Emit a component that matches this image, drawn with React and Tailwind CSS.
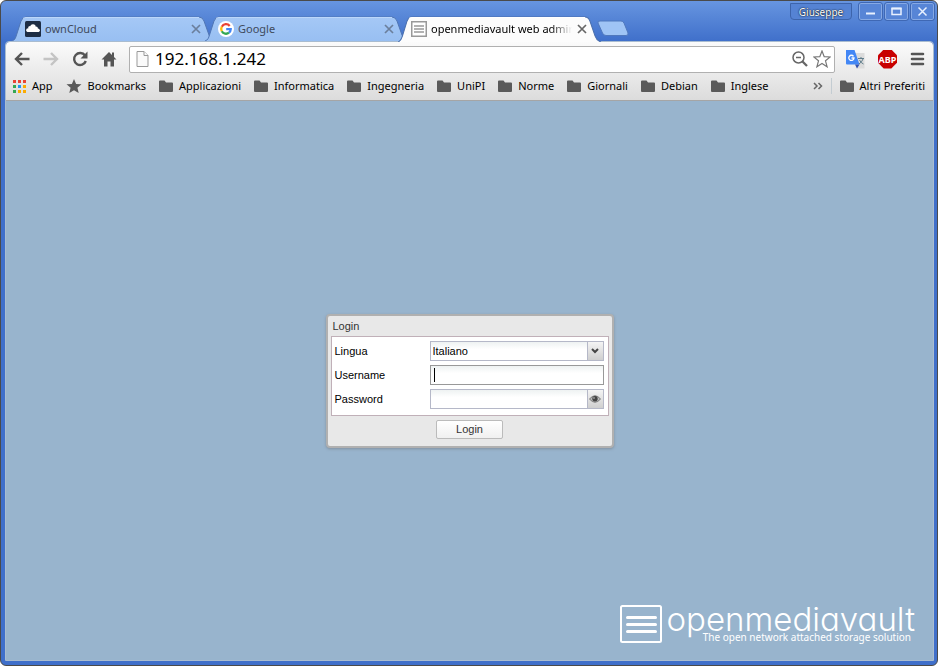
import React, { useState } from "react";

const bookmarks = ["Applicazioni", "Informatica", "Ingegneria", "UniPI", "Norme", "Giornali", "Debian", "Inglese"];

function Folder() {
  return (
    <svg className="shrink-0" width="15" height="13" viewBox="0 0 15 13" fill="#5a5a5a" aria-hidden="true">
      <path d="M1 0.500h4.500l1.500 2h6q1 0 1 1v7.500q0 1-1 1H1q-1 0-1-1V1.500q0-1 1-1z" />
    </svg>
  );
}

function Bookmark({ children, icon }) {
  return (
    <a href="#" className={`flex shrink-0 items-center whitespace-nowrap ${icon ? "gap-1.5" : "gap-[5px]"}`}>
      {icon || <Folder />}
      <span>{children}</span>
    </a>
  );
}

function Close({ dark }) {
  return (
    <button type="button" aria-label="Close tab" className="flex size-3 shrink-0 items-center justify-center">
      <svg width="10" height="10" viewBox="0 0 10 10" stroke={dark ? "#666" : "#6b7f9c"} strokeWidth="1.700" fill="none">
        <path d="M1 1l8 8M9 1L1 9" />
      </svg>
    </button>
  );
}

function Tab({ title, icon, active }) {
  return (
    <div className={`relative -mr-[11px] flex w-[204px] shrink items-center gap-1 pr-[14px] pl-[13px] ${active ? "z-10 h-[26px] text-black" : "h-[25px] text-[#3f4a5c]"}`}>
      <svg className="absolute inset-0 h-full w-full" viewBox="0 0 204 25" preserveAspectRatio="none" aria-hidden="true">
        <path
          d="M0 25C3 24 3.500 22 4.500 19L9 5Q10.500 1 14 1H187Q190.500 1 192 5L197 19C198 22 200 24 203 25"
          fill={active ? "#fcfcfc" : "url(#tabFill)"}
          stroke={active ? "#4a6fae" : "#5076b5"}
        />
        <path d="M11 2.500Q12 1.500 14 1.500H187" fill="none" stroke={active ? "#fff" : "#bcd7fa"} />
        <defs>
          <linearGradient id="tabFill" x1="0" y1="0" x2="0" y2="1">
            <stop offset="0" stopColor="#a5c8f6" />
            <stop offset="1" stopColor="#98bff2" />
          </linearGradient>
        </defs>
      </svg>
      <span className="relative shrink-0">{icon}</span>
      <a href="#" className={`relative min-w-0 flex-1 overflow-hidden whitespace-nowrap ${active ? "mask-r-from-85%" : ""}`}>{title}</a>
      <span className="relative"><Close dark={active} /></span>
    </div>
  );
}

const cloudIcon = (
  <svg width="16" height="16" viewBox="0 0 16 16">
    <rect width="16" height="16" rx="1.500" fill="#1d2d44" />
    <g fill="#fff">
      <circle cx="3" cy="9" r="1.800" /><circle cx="5" cy="7" r="1.900" /><circle cx="8" cy="6" r="2.700" /><circle cx="11" cy="7.500" r="1.900" />
      <circle cx="13" cy="9.300" r="1.700" /><rect x="1.500" y="8" width="13" height="3" rx="1.500" />
    </g>
  </svg>
);

const googleIcon = (
  <svg width="16" height="16" viewBox="0 0 16 16" fill="none" strokeWidth="2.300">
    <circle cx="8" cy="8" r="8" fill="#fff" />
    <path d="M11.700 4.900A4.800 4.800 0 0 0 3.800 5.700" stroke="#ea4335" />
    <path d="M3.800 5.700A4.800 4.800 0 0 0 3.800 10.300" stroke="#fbbc05" />
    <path d="M3.800 10.300A4.800 4.800 0 0 0 11 11.700" stroke="#34a853" />
    <path d="M11 11.700A4.800 4.800 0 0 0 12.700 8.200H8.200" stroke="#4285f4" />
  </svg>
);

const listIcon = (
  <svg width="16" height="16" viewBox="0 0 16 16" stroke="#999">
    <rect x="0.750" y="0.750" width="14.500" height="14.500" fill="#fff" strokeWidth="1.500" />
    <path d="M3 5h10M3 8h10M3 11h10" strokeWidth="1.500" />
  </svg>
);

function WindowButton({ label, children }) {
  return (
    <button type="button" aria-label={label} className="flex h-[17px] w-[23px] items-center justify-center rounded-xs border border-[#86a9e4] bg-[#5785d6] outline outline-[#3f68b4]">
      <svg width="13" height="11" viewBox="0 0 13 11" fill="none" stroke="#e9f1ff" strokeWidth="1.500">{children}</svg>
    </button>
  );
}

function TitleBar() {
  return (
    <header className="flex h-10 items-start pl-[7px]">
      <nav aria-label="Tabs" className="flex min-w-0 flex-1 pt-[15px] text-[11px] leading-4">
        <Tab title="ownCloud" icon={cloudIcon} />
        <Tab title="Google" icon={googleIcon} />
        <Tab title="openmediavault web administration" icon={listIcon} active />
        <button type="button" aria-label="New tab" className="ml-1.5 flex h-[25px] shrink-0 items-center">
          <svg width="32" height="17" viewBox="0 0 32 17">
            <path d="M3 1H24Q26 1 27 3L31 13Q31.500 15.500 29 15.500H9Q6.500 15.500 5.500 13L1 3Q0.500 1 3 1Z" fill="#9fc4f5" stroke="#5078bd" />
          </svg>
        </button>
      </nav>
      <div className="flex shrink-0 items-start gap-[3px] pt-[2px]">
        <button type="button" className="mr-1 h-[17px] w-[62px] rounded-b-sm border border-[#3d64ab] bg-[#5583d4] text-[10px] leading-4 text-white [text-shadow:0_0_1px_#000,0_0_2px_#123]">Giuseppe</button>
        <WindowButton label="Minimize"><path d="M2 7.500h9" strokeWidth="2" /></WindowButton>
        <WindowButton label="Maximize"><path d="M2 2.500h9v6H2z" /><path d="M1.500 2.500h10" strokeWidth="2" /></WindowButton>
        <WindowButton label="Close"><path d="M2.500 1.500l8 8M10.500 1.500l-8 8" /></WindowButton>
      </div>
    </header>
  );
}

function ToolButton({ label, children }) {
  return (
    <button type="button" aria-label={label} className="flex size-[18px] shrink-0 items-center justify-center">
      <svg width="18" height="18" viewBox="0 0 18 18" fill="none" stroke="#555" strokeWidth="2.400">{children}</svg>
    </button>
  );
}

function Toolbar() {
  return (
    <div className="flex h-[34px] items-center gap-[11px] pr-2 pl-[7px]">
      <ToolButton label="Back"><path d="M16.500 9H3M9 3L3 9l6 6" /></ToolButton>
      <ToolButton label="Forward"><path d="M1.500 9H15M9 3l6 6-6 6" stroke="#c4c4c4" /></ToolButton>
      <ToolButton label="Reload">
        <path d="M14 5.500A6 6 0 1 0 14.800 11" /><path d="M16.500 1.500v7H9.500z" fill="#555" stroke="none" />
      </ToolButton>
      <ToolButton label="Home">
        <path d="M9 2L1.500 9.500H4V16.500H7.500V11.500H10.500V16.500H14V9.500H16.500L14 7V2.500H12V5Z" fill="#555" stroke="none" />
      </ToolButton>
      <div className="flex h-[27px] min-w-0 flex-1 items-center rounded-xs border border-[#b0b0b0] bg-white pr-[3px] pl-1.5">
        <svg className="shrink-0" width="13" height="16" viewBox="0 0 13 16" fill="#fafafa" stroke="#999">
          <path d="M1 0.500h7l4 4v11H1z" /><path d="M8 0.500v4h4" />
        </svg>
        <input aria-label="Address" defaultValue="192.168.1.242" className="min-w-0 flex-1 bg-transparent px-1.5 text-[17px] leading-6 outline-none" />
        <button type="button" aria-label="Zoom" className="mr-1 shrink-0">
          <svg width="18" height="18" viewBox="0 0 18 18" fill="none" stroke="#666" strokeWidth="1.500">
            <circle cx="7.500" cy="7.500" r="5.500" /><path d="M5 7.500h5" /><path d="M11.500 11.500l4.500 4.500" strokeWidth="2.300" />
          </svg>
        </button>
        <button type="button" aria-label="Bookmark this page" className="shrink-0">
          <svg width="18" height="18" viewBox="0 0 18 18" fill="#fff" stroke="#777" strokeWidth="1.200">
            <path d="M9 1l2.200 5.700 6 .3-4.700 3.800 1.600 6L9 13.500l-5.100 3.300 1.600-6L.8 7l6-.3z" />
          </svg>
        </button>
      </div>
      <div className="flex shrink-0 items-center gap-[13px]">
        <button type="button" aria-label="Google Translate">
          <svg width="19" height="19" viewBox="0 0 19 19">
            <path d="M8 3h10.500v15.500h-8z" fill="#dcdcdc" />
            <path d="M0 0h8.500l5 14.500H1Q0 14.500 0 13.500z" fill="#4387f5" />
            <path d="M9 14.500h4.500L11 18.500z" fill="#3151b0" />
            <path d="M7.500 6.300A2.600 2.600 0 1 0 8 8H5.500" fill="none" stroke="#fff" strokeWidth="1.300" />
            <path d="M12 8.500h6M15 7v1.500M17 9q-1 3-4 5M13.500 10q1.500 3 4 4" fill="none" stroke="#607d8b" />
          </svg>
        </button>
        <button type="button" aria-label="Adblock Plus" className="flex size-[19px] items-center justify-center bg-[#c80000] text-[9px] leading-none font-bold text-white [clip-path:polygon(30%_0,70%_0,100%_30%,100%_70%,70%_100%,30%_100%,0_70%,0_30%)]">ABP</button>
        <button type="button" aria-label="Menu">
          <svg width="15" height="14" viewBox="0 0 15 14" stroke="#555" strokeWidth="2.600" strokeLinecap="round"><path d="M2 2h11M2 7h11M2 12h11" /></svg>
        </button>
      </div>
    </div>
  );
}

function AppsIcon() {
  const colors = ["#ea4335", "#ea4335", "#ea4335", "#34a853", "#2196f3", "#fbab00", "#34a853", "#fbab00", "#fbab00"];
  return (
    <svg width="13" height="13" viewBox="0 0 13 13" aria-hidden="true">
      {colors.map((c, i) => <rect key={i} x={(i % 3) * 5} y={Math.floor(i / 3) * 5} width="3" height="3" fill={c} />)}
    </svg>
  );
}

function BookmarksBar() {
  return (
    <nav aria-label="Bookmarks" className="flex h-6 items-center gap-[13px] pr-2 pl-[7px] pb-1 text-[11px] leading-4">
      <Bookmark icon={<AppsIcon />}>App</Bookmark>
      <Bookmark
        icon={<svg width="16" height="16" viewBox="0 0 16 16" fill="#5a5a5a"><path d="M8 1l2.100 4.900 5.400.4-4.100 3.500 1.300 5.200L8 12.200 3.300 15l1.300-5.200L.5 6.300l5.400-.4z" /></svg>}
      >
        Bookmarks
      </Bookmark>
      {bookmarks.map((b) => <Bookmark key={b}>{b}</Bookmark>)}
      <div className="ml-auto flex items-center gap-2">
        <button type="button" aria-label="More bookmarks">
          <svg width="10" height="8" viewBox="0 0 10 8" fill="none" stroke="#666" strokeWidth="1.500"><path d="M1 1l3 3-3 3M5.500 1l3 3-3 3" /></svg>
        </button>
        <span className="h-4 w-px bg-[#c3ccd2]" />
        <Bookmark>Altri Preferiti</Bookmark>
      </div>
    </nav>
  );
}

const field = "h-5 min-w-0 flex-1 appearance-none border border-[#b5b8c8] bg-linear-to-b from-[#eef2f2] to-white to-40% px-0.5 outline-none";
const row = "flex h-5 items-center";
const trigger = "flex h-5 w-4 shrink-0 items-center justify-center border border-l-0 border-[#b5b8c8] bg-linear-to-b from-[#f4f4f4] to-[#cfcfcf]";

function LoginPanel() {
  const [show, setShow] = useState(false);
  return (
    <form className="w-[288px] rounded-sm border-2 border-[#b0b0b0] bg-[#e8e8e8] px-[3px] pb-[7px] font-['Liberation_Sans',Arial,sans-serif] text-[11px] leading-4 text-black shadow-[0_1px_3px_#8090a0]" onSubmit={(e) => e.preventDefault()}>
      <h1 className="h-5 px-0.5 pt-0.5 text-[#333]">Login</h1>
      <div className="flex flex-col gap-1 border border-[#c0b0b8] bg-white pt-1 pr-1 pb-[6px] pl-[3px]">
        <div className={row}>
          <label htmlFor="lang" className="w-[95px]">Lingua</label>
          <select id="lang" className={field}><option>Italiano</option></select>
          <span className={trigger}>
            <svg width="8" height="6" viewBox="0 0 8 6" fill="none" stroke="#444" strokeWidth="2"><path d="M1 1l3 3 3-3" /></svg>
          </span>
        </div>
        <div className={row}>
          <label htmlFor="user" className="w-[95px]">Username</label>
          <span className="flex h-5 min-w-0 flex-1 items-center border border-[#999] bg-linear-to-b from-[#eef2f2] to-white to-40% pl-[3px]">
            <span className="h-3.5 w-px bg-black" />
            <input id="user" className="min-w-0 flex-1 outline-none" />
          </span>
        </div>
        <div className={row}>
          <label htmlFor="pass" className="w-[95px]">Password</label>
          <input id="pass" type={show ? "text" : "password"} className={field} />
          <button type="button" aria-label="Show password" className={trigger} onClick={() => setShow(!show)}>
            <svg width="12" height="8" viewBox="0 0 12 8"><path d="M0.500 4Q6-2.500 11.500 4Q6 10.500 0.500 4Z" fill="#bbb" stroke="#777" /><circle cx="6" cy="3.800" r="2.700" fill="#444" /><circle cx="5" cy="3" r="0.800" fill="#ccc" /></svg>
          </button>
        </div>
      </div>
      <div className="flex justify-center pt-1">
        <button type="submit" className="h-[19px] w-[67px] rounded-xs border border-[#bbb] bg-linear-to-b from-white to-[#f0f0f0] text-[#333]">Login</button>
      </div>
    </form>
  );
}

function Brand() {
  return (
    <div className="flex items-start gap-[5px] text-white">
      <svg className="shrink-0" width="42" height="38" viewBox="0 0 42 38" fill="none" stroke="#fff" strokeLinecap="round">
        <rect x="1" y="1" width="40" height="36" rx="1.500" strokeWidth="2" />
        <path d="M7.500 12.500h28M7.500 19.500h28M7.500 26.500h28" strokeWidth="3" />
      </svg>
      <div className="flex flex-col items-end">
        <div className="h-[27px] font-['Inter',sans-serif] text-[33px] leading-[28px] font-light [font-feature-settings:'cv11']">openmediavault</div>
        <div className="pr-1 text-[10px] leading-[11px]">The open network attached storage solution</div>
      </div>
    </div>
  );
}

export default function App() {
  return (
    <div className="flex min-h-screen flex-col rounded-md border border-[#4a4a4a] bg-linear-to-b from-[#6795e0] to-[#3f6fca] to-[41px] pr-[3px] pl-1 pb-1 font-['Noto_Sans',sans-serif] text-black">
      <TitleBar />
      <div className="flex flex-1 flex-col rounded-t-sm border border-[#a9bcd0]">
        <div className="rounded-t-sm border-b border-[#a5a5a5] bg-linear-to-b from-[#fbfbfb] to-[#dcdcdc]">
          <Toolbar />
          <BookmarksBar />
        </div>
        <main className="grid flex-1 grid-rows-[1fr_auto_1fr] bg-[#98b4cd]">
          <div className="row-start-2 flex justify-center"><LoginPanel /></div>
          <div className="row-start-3 flex items-end justify-end pr-[18px] pb-[17px]"><Brand /></div>
        </main>
      </div>
    </div>
  );
}
